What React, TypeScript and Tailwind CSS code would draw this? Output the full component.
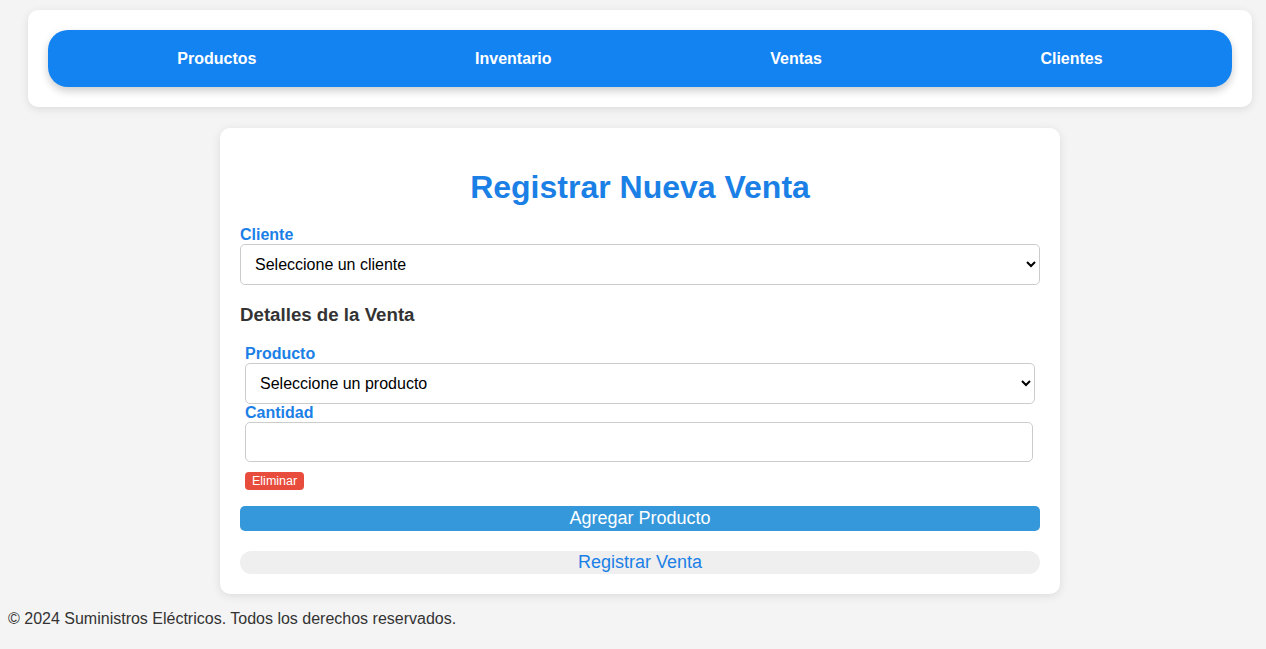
import React from 'react';

const navItems = ['Productos', 'Inventario', 'Ventas', 'Clientes'];

export default function App() {
  return (
    <div className="min-h-[649px] bg-[#f4f4f4] font-['Liberation_Sans',Arial,sans-serif] text-[#333]">
      <div className="ml-[28px] mr-[14px] pt-[10px]">
        {/* header */}
        <header className="rounded-[10px] bg-white p-5 shadow-[0_2px_8px_rgba(0,0,0,0.1)]">
          <nav className="flex h-[57px] items-center justify-around rounded-[20px] bg-[#1383f2] px-5 shadow-[0_4px_8px_rgba(0,0,0,0.2)]">
            {navItems.map((item) => (
              <a key={item} href="#" className="text-base font-bold text-white">
                {item}
              </a>
            ))}
          </nav>
        </header>

        {/* form card */}
        <main className="mx-auto mt-[21px] w-[840px] rounded-[10px] bg-white px-5 pt-5 pb-[20px] shadow-[0_2px_10px_rgba(0,0,0,0.1)]">
          <h1 className="mt-[21px] mb-[20px] text-center text-[32px] leading-[37px] font-bold text-[#1b80e6]">
            Registrar Nueva Venta
          </h1>

          <label className="block text-base leading-[18px] font-bold text-[#1b80e6]">Cliente</label>
          <select className="h-[41px] w-full rounded-[5px] border border-[#ccc] bg-white px-[10px] text-base text-black">
            <option>Seleccione un cliente</option>
          </select>

          <h3 className="mt-[19px] mb-[20px] text-[18.7px] leading-[21px] font-bold text-[#333]">
            Detalles de la Venta
          </h3>

          <div className="px-[5px]">
            <label className="block text-base leading-[18px] font-bold text-[#1b80e6]">Producto</label>
            <select className="h-[41px] w-full rounded-[5px] border border-[#ccc] bg-white px-[10px] text-base text-black">
              <option>Seleccione un producto</option>
            </select>
            <label className="block text-base leading-[18px] font-bold text-[#1b80e6]">Cantidad</label>
            <input
              type="number"
              className="block h-[40px] w-[788px] rounded-[5px] border border-[#ccc] bg-white px-[10px] text-base"
            />
            <button className="mt-[10px] rounded-[4px] bg-[#e74c3c] px-[7px] py-[1px] text-[12.5px] leading-[16px] text-white">
              Eliminar
            </button>
          </div>

          <button className="mt-[14px] block h-[25px] w-full rounded-[5px] bg-[#3498db] text-[18px] leading-[21px] text-white">
            Agregar Producto
          </button>
          <button className="mt-[20px] block h-[23px] w-full rounded-[12px] bg-[#efefef] text-[18px] leading-[21px] text-[#1b80e6]">
            Registrar Venta
          </button>
        </main>
      </div>

      <footer className="px-2 pt-[16px] text-base leading-[18px] text-[#333]">
        © 2024 Suministros Eléctricos. Todos los derechos reservados.
      </footer>
    </div>
  );
}
